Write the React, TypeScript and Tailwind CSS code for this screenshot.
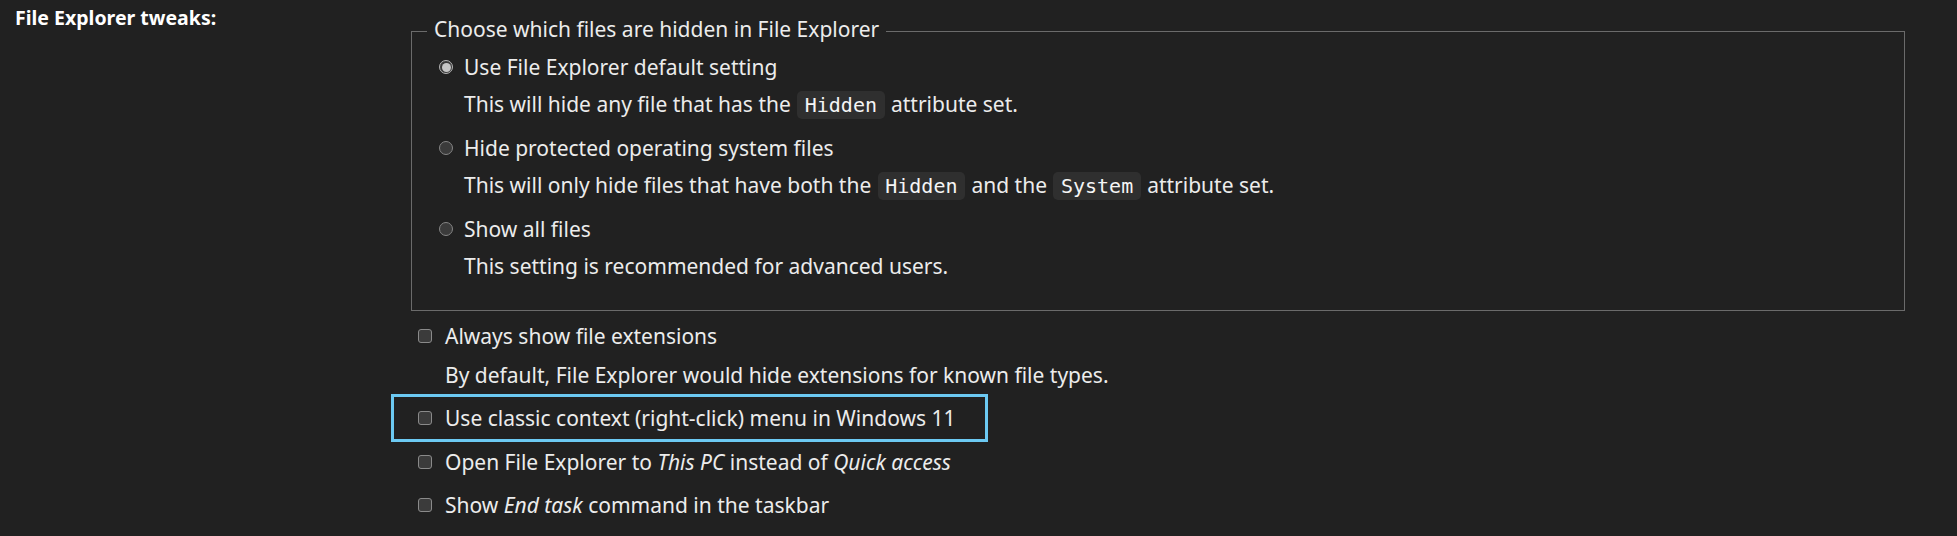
const radioOptions = [
  {
    id: 'default',
    label: 'Use File Explorer default setting',
    checked: true,
    desc: (
      <>
        This will hide any file that has the <Code>Hidden</Code> attribute set.
      </>
    ),
  },
  {
    id: 'protected',
    label: 'Hide protected operating system files',
    checked: false,
    desc: (
      <>
        This will only hide files that have both the <Code>Hidden</Code> and the <Code>System</Code> attribute set.
      </>
    ),
  },
  {
    id: 'all',
    label: 'Show all files',
    checked: false,
    desc: <>This setting is recommended for advanced users.</>,
  },
];

function Code({ children }: { children: React.ReactNode }) {
  return (
    <code className="mx-[1px] rounded-[5px] bg-[#2f2f2f] px-[7.5px] py-[2px] font-['DejaVu_Sans_Mono',monospace] text-[20px] leading-[20px] text-[#f5f5f5]">
      {children}
    </code>
  );
}

function Radio({ checked }: { checked: boolean }) {
  return checked ? (
    <span className="flex h-[14px] w-[14px] shrink-0 items-center justify-center rounded-full border border-[#b4b4b4] bg-[#3a3a3a]">
      <span className="h-[9px] w-[9px] rounded-full bg-[#c6c6c6]" />
    </span>
  ) : (
    <span className="h-[14px] w-[14px] shrink-0 rounded-full border border-[#858585] bg-[#3b3b3b]" />
  );
}

function Checkbox() {
  return <span className="h-[14px] w-[14px] shrink-0 rounded-[3px] border border-[#8a8a8a] bg-[#3b3b3b]" />;
}

export default function App() {
  return (
    <div className="flex min-h-screen bg-[#212121] font-['Noto_Sans',sans-serif] text-[21px] leading-[28px] text-[#ececec]">
      {/* Section label */}
      <div className="w-[411px] shrink-0 pl-[15px] pt-[4px] text-[19.5px] font-bold text-white">File Explorer tweaks:</div>

      <div className="flex-1 pr-[52px] pt-[15px]">
        {/* Hidden files group */}
        <fieldset className="border border-[#6b6b6b] px-[15px] pb-[30px]">
          <legend className="px-[7px] pb-[4px]">Choose which files are hidden in File Explorer</legend>
          <div className="mt-[6px] pl-[12px]">
            {radioOptions.map((opt, i) => (
              <div key={opt.id} className={i > 0 ? 'mt-[16.5px]' : ''}>
                <label className="flex items-center gap-[11px]">
                  <Radio checked={opt.checked} />
                  <span>{opt.label}</span>
                </label>
                <p className="mt-[8.5px] pl-[25px]">{opt.desc}</p>
              </div>
            ))}
          </div>
        </fieldset>

        {/* Checkbox options */}
        <div className="mt-[11.5px]">
          <label className="flex items-center gap-[13px] pl-[7px]">
            <Checkbox />
            <span>Always show file extensions</span>
          </label>
          <p className="mt-[10.5px] pl-[34px]">By default, File Explorer would hide extensions for known file types.</p>

          <div className="relative mt-[15px]">
            <label className="flex items-center gap-[13px] pl-[7px]">
              <Checkbox />
              <span>Use classic context (right-click) menu in Windows 11</span>
            </label>
            <span className="pointer-events-none absolute left-[-20px] top-[-10px] h-[48px] w-[597px] border-[3px] border-[#6cc9f2]" />
          </div>

          <label className="mt-[16px] flex items-center gap-[13px] pl-[7px]">
            <Checkbox />
            <span>
              Open File Explorer to <em>This PC</em> instead of <em>Quick access</em>
            </span>
          </label>

          <label className="mt-[15px] flex items-center gap-[13px] pl-[7px]">
            <Checkbox />
            <span>
              Show <em>End task</em> command in the taskbar
            </span>
          </label>
        </div>
      </div>
    </div>
  );
}
